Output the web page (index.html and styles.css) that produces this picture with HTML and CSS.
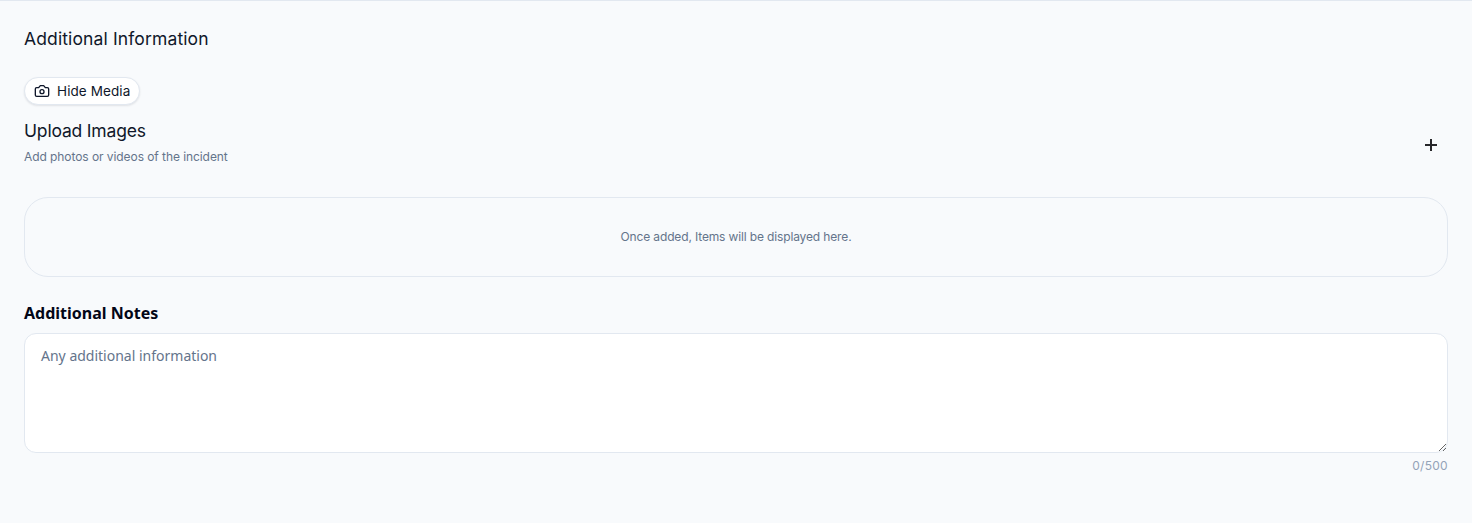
FILE: index.html
```html
<!DOCTYPE html>
<html lang="en">
<head>
<meta charset="UTF-8">
<title>Additional Information</title>
<link rel="stylesheet" href="styles.css">
</head>
<body>
	<div class="page">
		<h2 class="title">Additional Information</h2>
		<button class="media-btn" type="button">
			<svg width="16" height="16" viewBox="0 0 24 24" fill="none" stroke="currentColor" stroke-width="2" stroke-linecap="round" stroke-linejoin="round"><path d="M14.5 4h-5L7 7H4a2 2 0 0 0-2 2v9a2 2 0 0 0 2 2h16a2 2 0 0 0 2-2V9a2 2 0 0 0-2-2h-3l-2.5-3z"/><circle cx="12" cy="13" r="3"/></svg>
			<span>Hide Media</span>
		</button>
		<div class="upload">
			<div class="upload-text">
				<h3 class="upload-title">Upload Images</h3>
				<p class="upload-sub">Add photos or videos of the incident</p>
			</div>
			<button class="add-btn" type="button">
				<svg width="16" height="16" viewBox="0 0 16 16" fill="none" stroke="currentColor" stroke-width="2"><path d="M8 2v12M2 8h12"/></svg>
			</button>
		</div>
		<div class="empty">Once added, Items will be displayed here.</div>
		<label class="notes-label" for="notes">Additional Notes</label>
		<textarea class="notes" id="notes" placeholder="Any additional information"></textarea>
		<div class="counter">0/500</div>
	</div>
</body>
</html>
```

FILE: styles.css
```css
* {box-sizing: border-box;}
body {margin: 0;background-color: #f8fafc;color: #0f172a;font-family: "Inter", "Liberation Sans", sans-serif;}
h2, h3, p {margin: 0;}
.page {height: 523px;border-top: 1px solid #e2e8f0;padding: 24px 24px 0;}
.title {font-size: 17.5px;line-height: 28px;font-weight: 400;letter-spacing: 0.13px;}
.media-btn {display: flex;align-items: center;gap: 7px;height: 28px;margin-top: 24px;padding: 0 8.5px 0 9px;background-color: #fff;border: 1px solid #e2e8f0;border-radius: 14px;box-shadow: 0 1px 2px rgba(15, 23, 42, 0.1);color: #0f172a;font-family: inherit;font-size: 13.5px;letter-spacing: 0.1px;}
.upload {display: flex;align-items: center;justify-content: space-between;margin-top: 12px;}
.upload-text {padding-bottom: 8px;}
.upload-title {font-size: 17.5px;line-height: 28px;font-weight: 400;letter-spacing: -0.18px;}
.upload-sub {margin-top: 4px;font-size: 12px;line-height: 16px;letter-spacing: -0.07px;color: #64748b;}
.add-btn {display: flex;padding: 0;margin-right: 9px;background: none;border: 0;color: #27272a;}
.empty {display: flex;align-items: center;justify-content: center;height: 80px;margin-top: 24px;padding-bottom: 1px;border: 1px solid #e2e8f0;border-radius: 24px;font-size: 12px;letter-spacing: -0.14px;color: #64748b;}
.notes-label {display: block;margin-top: 24px;font-family: "Noto Sans", sans-serif;font-size: 16px;line-height: 24px;font-weight: 700;color: #020617;}
.notes {display: block;width: 100%;height: 120px;margin-top: 8px;padding: 12px 16px;background-color: #fff;border: 1px solid #e2e8f0;border-radius: 12px;font-family: "Noto Sans", sans-serif;font-size: 14px;line-height: 20px;outline: none;}
.notes::placeholder {color: #64748b;opacity: 1;}
.counter {margin-top: 5px;font-size: 12px;line-height: 16px;letter-spacing: 0.3px;text-align: right;color: #94a3b8;}
```
